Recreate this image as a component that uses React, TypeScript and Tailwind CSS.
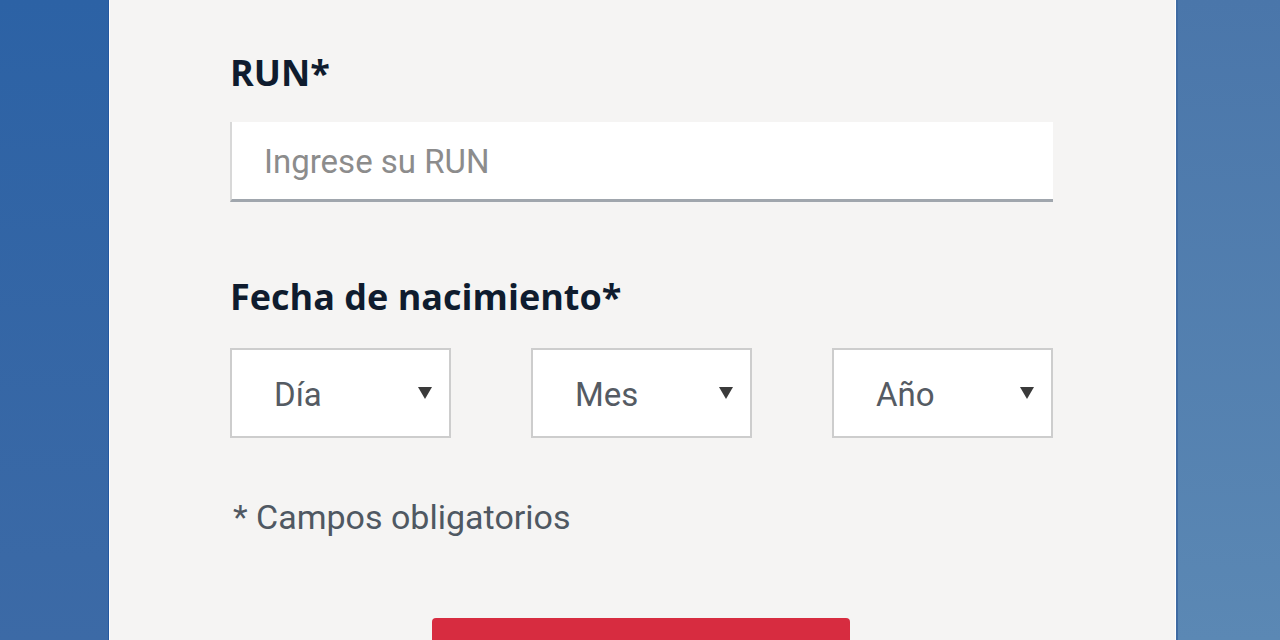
import React from "react";

function Caret() {
  return (
    <svg width="16" height="14" viewBox="0 0 16 14" className="shrink-0">
      <path d="M1 1 H15 L8 13 Z" fill="#3a3a3a" />
    </svg>
  );
}

function Select({ label }: { label: string }) {
  return (
    <div className="w-[221px] h-[90px] bg-white border-2 border-[#cdcdcd] flex items-center justify-between pl-[42px] pr-[16px]">
      <span className="text-[33px] text-[#555b63] pt-[4px]">{label}</span>
      <Caret />
    </div>
  );
}

export default function App() {
  return (
    <div
      className="w-[1280px] h-[640px] overflow-hidden flex bg-gradient-to-b from-[#2c62a5] to-[#3c6aa6]"
      style={{ fontFamily: "Roboto, 'Open Sans', sans-serif" }}
    >
      <div className="w-[109px] shrink-0 border-r border-[#2558a0]" />
      <div className="w-[1067px] shrink-0 bg-[#f5f4f3] border-x border-white pl-[120px] pt-[50px]">
        <div className="w-[823px] flex flex-col">
          <label className="font-['Open_Sans'] text-[36px] font-bold text-[#0f1c2e] leading-[46px]">RUN*</label>
          <div className="mt-[26px] h-[80px] bg-white border-l-2 border-l-[#d8d8d8] border-b-[3px] border-b-[#a0a6ad] flex items-center pl-[32px]">
            <span className="text-[33px] text-[#8c8c8c] pt-[2px]">Ingrese su RUN</span>
          </div>
          <label className="font-['Open_Sans'] mt-[72px] text-[36px] font-bold text-[#0f1c2e] leading-[46px]">Fecha de nacimiento*</label>
          <div className="mt-[28px] flex justify-between">
            <Select label="Día" />
            <Select label="Mes" />
            <Select label="Año" />
          </div>
          <p className="mt-[58px] text-[34px] text-[#4f5862] leading-[42px] pl-[3px]">* Campos obligatorios</p>
          <div className="mt-[80px] ml-[202px] w-[418px] h-[60px] bg-[#d72c40] rounded-t-[4px]" />
        </div>
      </div>
      <div className="flex-1 bg-gradient-to-b from-[#4a76aa] to-[#5b88b4] border-l-2 border-[#3f6ba3]" />
    </div>
  );
}
